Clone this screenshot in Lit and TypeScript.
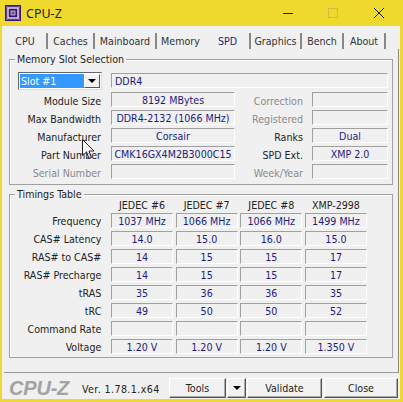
import { LitElement, html, css } from "lit";
import { customElement } from "lit/decorators.js";

const tabs: [string, number][] = [["CPU", 44],["Caches", 47],["Mainboard", 62],["Memory", 49],["SPD", 45],["Graphics", 51],["Bench", 42],["About", 42]];
const rows1 = [
  ["Module Size", "8192 MBytes", "Correction", "", true],
  ["Max Bandwidth", "DDR4-2132 (1066 MHz)", "Registered", "", true],
  ["Manufacturer", "Corsair", "Ranks", "Dual", false],
  ["Part Number", "CMK16GX4M2B3000C15", "SPD Ext.", "XMP 2.0", false],
  ["Serial Number", "", "Week/Year", "", true],
] as const;
const timings: [string, string[]][] = [
  ["Frequency", ["1037 MHz","1066 MHz","1066 MHz","1499 MHz"]],
  ["CAS# Latency", ["14.0","15.0","16.0","15.0"]],
  ["RAS# to CAS#", ["14","15","15","17"]],
  ["RAS# Precharge", ["14","15","15","17"]],
  ["tRAS", ["35","36","36","35"]],
  ["tRC", ["49","50","50","52"]],
  ["Command Rate", ["","","",""]],
  ["Voltage", ["1.20 V","1.20 V","1.20 V","1.350 V"]],
];

@customElement("app-root")
export class AppRoot extends LitElement {
  static styles = css`
    :host { display: block; width: 403px; height: 402px; position: relative; overflow: hidden;
      background: #f0f0f0; font-family: "DejaVu Sans Condensed", "DejaVu Sans", sans-serif; font-size: 10.6px; color: #222; }
    .win { width: 403px; height: 402px; box-sizing: border-box; display: flex; flex-direction: column;
      border: solid #efd92c; border-width: 0 3px 3px 2px; }
    .title { height: 26px; margin: 0 -3px 0 -2px; background: #efd92c; display: flex; align-items: center; flex: none; }
    .title .ico { margin-left: 5px; width: 16px; height: 16px; }
    .title .name { margin-left: 5px; font: 12.5px "Noto Sans", sans-serif; color: #222; }
    .title .ctl { margin-left: auto; display: flex; }
    .ctl svg { display: block; width: 46px; height: 26px; }
    .tabs { display: flex; height: 23px; padding: 7px 0 0 2px; box-sizing: border-box; flex: none; }
    .tab { height: 16px; box-sizing: border-box; text-align: center; border-right: 2px solid #888; line-height: 16px; color: #333; flex: none; }
    .tab.plain { border-right-color: transparent; }
    .tab.on { color: #1c1c80; }
    .panel { height: 324px; margin: 0 0 0 2px; width: 395px; box-sizing: border-box; border-right: 1px solid #888; border-bottom: 1px solid #999; padding: 10px 4px 0 5px; flex: none; }
    .group { position: relative; border: 1px solid #a0a0a0; box-shadow: inset 1px 1px 0 #fff; box-sizing: border-box; width: 384px; }
    .g1 { height: 126px; padding: 11px 4px 0 8px; margin-bottom: 9px; }
    .g2 { height: 164px; padding: 0 4px 0 8px; }
    .legend { position: absolute; left: 5px; top: -8px; background: #f0f0f0; padding: 0 2px; line-height: 15px; color: #222; }
    .slot { display: flex; align-items: center; gap: 9px; height: 19px; margin-bottom: 2px; }
    .select { width: 84px; height: 18px; box-sizing: border-box; border: 1px solid; border-color: #666 #ddd #ddd #666; display: flex; background: #fff; padding: 1px; }
    .select .val { flex: 1; background: #3399ff; color: #fff; line-height: 14px; padding-left: 1px; }
    .select .btn { width: 16px; background: #f0f0f0; border: 1px solid; border-color: #fff #555 #555 #fff; display: flex; align-items: center; justify-content: center; box-sizing: border-box; }
    .arrow { width: 0; height: 0; border: solid transparent; border-width: 4px 4px 0; border-top-color: #000; }
    .field { height: 15px; box-sizing: border-box; border: 1px solid; border-color: #a0a0a0 #fff #fff #a0a0a0; text-align: center; color: #1c1c80; line-height: 15px; white-space: nowrap; overflow: hidden; }
    .type { width: 277px; text-align: left; padding-left: 3px; }
    .r1 { display: grid; grid-template-columns: 93px 124px 77px 76px; row-gap: 3px; align-items: center; }
    .r1 .lab { text-align: right; padding: 2px 10px 0 0; height: 15px; box-sizing: border-box; line-height: 15px; }
    .r1 .lab2 { text-align: right; padding: 2px 9px 0 0; height: 15px; box-sizing: border-box; line-height: 15px; }
    .lab.dis, .lab2.dis { color: #8a8a8a; }
    .r2 { display: grid; grid-template-columns: 90.33px 62px 62px 62px 62px; column-gap: 2.67px; row-gap: 3px; align-items: center; margin-top: 2px; }
    .r2 .lab { text-align: right; padding: 1px 7px 0 0; height: 15px; box-sizing: border-box; line-height: 15px; white-space: nowrap; }
    .head { text-align: center; line-height: 17px; height: 13px; white-space: nowrap; }
    .foot { flex: 1; display: flex; align-items: center; padding: 4px 0 0 7px; min-height: 0; }
    .logo { font: italic bold 20px/20px "Liberation Sans", sans-serif; color: #a2a2a2; width: 73px; letter-spacing: -0.2px; }
    .ver { width: 87px; color: #222; letter-spacing: .4px; white-space: nowrap; padding-top: 2px; }
    .b { height: 20px; box-sizing: border-box; border: 1px solid; border-color: #fff #555 #555 #fff; box-shadow: inset -1px -1px 0 #aaa; background: #f2f2f2; display: flex; align-items: center; justify-content: center; flex: none; }
    .cursor { position: absolute; left: 82px; top: 139px; width: 12px; height: 21px; }
  `;
  render() {
    return html`<div class="win">
      <div class="title">
        <svg class="ico" viewBox="0 0 16 16"><rect width="16" height="16" fill="#3a1670"/><rect x="3" y="3" width="10" height="10" fill="none" stroke="#e8e0f0" stroke-width="1.4"/><rect x="6" y="6" width="4" height="4" fill="#6a4a9a" stroke="#fff" stroke-width=".6"/><path d="M2 1.5v13M14 1.5v13M1.5 2h13M1.5 14h13" stroke="#c8b8e0" stroke-width="1" stroke-dasharray="1 1" fill="none"/></svg>
        <span class="name">CPU-Z</span>
        <div class="ctl">
          <svg viewBox="0 0 46 26"><path d="M18 13.5h10" stroke="#222" stroke-width="1"/></svg>
          <svg viewBox="0 0 46 26"><rect x="17.5" y="8.5" width="9" height="9" fill="none" stroke="#cdbb45"/></svg>
          <svg viewBox="0 0 46 26"><path d="M17 8l10 10M27 8L17 18" stroke="#222" stroke-width="1"/></svg>
        </div>
      </div>
      <div class="tabs">
        ${tabs.map(([t,w]) => html`<div class="tab ${t==="SPD"?"on":""} ${t==="Memory"?"plain":""}" style="width:${w}px">${t}</div>`)}
      </div>
      <div class="panel">
        <div class="group g1">
          <div class="legend">Memory Slot Selection</div>
          <div class="slot">
            <div class="select"><div class="val">Slot #1</div><div class="btn"><div class="arrow"></div></div></div>
            <div class="field type">DDR4</div>
          </div>
          <div class="r1">
            ${rows1.map(r => html`
              <div class="lab ${r[0]==="Serial Number"?"dis":""}">${r[0]}</div>
              <div class="field">${r[1]}</div>
              <div class="lab2 ${r[4]?"dis":""}">${r[2]}</div>
              <div class="field">${r[3]}</div>`)}
          </div>
        </div>
        <div class="group g2">
          <div class="legend">Timings Table</div>
          <div class="r2">
            <div></div>${["JEDEC #6","JEDEC #7","JEDEC #8","XMP-2998"].map(h => html`<div class="head">${h}</div>`)}
            ${timings.map(([l,vs]) => html`<div class="lab">${l}</div>${vs.map(v => html`<div class="field">${v}</div>`)}`)}
          </div>
        </div>
      </div>
      <div class="foot">
        <div class="logo">CPU-Z</div>
        <div class="ver">Ver. 1.78.1.x64</div>
        <div class="b" style="width:57px;margin-right:1px">Tools</div>
        <div class="b" style="width:19px;margin-right:1px"><div class="arrow"></div></div>
        <div class="b" style="width:75px;margin-right:2px">Validate</div>
        <div class="b" style="width:74px">Close</div>
      </div>
    </div>
    <svg class="cursor" viewBox="0 0 12 21"><path d="M.5.5v16l4-3.5 2.5 6.5 2.5-1-2.5-6.5h5z" fill="rgba(255,255,255,.55)" stroke="#222" stroke-width="1"/></svg>`;
  }
}
